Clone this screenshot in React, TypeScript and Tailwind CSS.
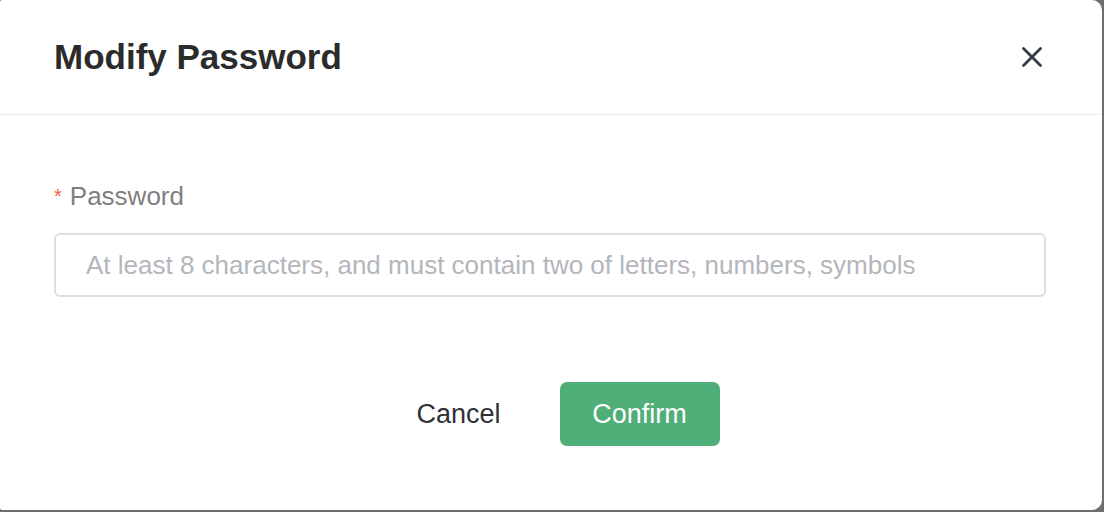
import React from 'react';

const CloseIcon: React.FC = () => (
  <svg width="22" height="22" viewBox="0 0 22 22" fill="none" stroke="#343a44" strokeWidth={2.8} strokeLinecap="round">
    <path d="M2.5 2.5L19.5 19.5M19.5 2.5L2.5 19.5" />
  </svg>
);

export default function App() {
  return (
    <div className="h-[512px] w-[1104px] overflow-hidden bg-[#6e6e6e]" style={{ fontFamily: '"Liberation Sans", Arial, sans-serif' }}>
      <div className="flex h-[510px] w-[1102px] flex-col rounded-tl-[2px] rounded-bl-[2px] rounded-tr-[10px] rounded-br-[10px] bg-white">
        {/* header */}
        <div className="flex h-[115px] items-center justify-between border-b border-[#e9edf1] pl-[54px] pr-[59px]">
          <h2 className="mt-[1px] text-[35px] font-bold text-[#2b2b2b]">Modify Password</h2>
          <button className="flex h-[22px] w-[22px] items-center justify-center">
            <CloseIcon />
          </button>
        </div>

        {/* body */}
        <div className="px-[54px] pt-[66px]">
          <label className="flex items-center text-[26px] leading-[30px] text-[#7f7f7f]">
            <span className="mr-[8px] text-[20px] text-[#e5673f]">*</span>
            Password
          </label>
          <div className="mt-[22px] flex h-[64px] w-[992px] items-center rounded-[6px] border-2 border-[#dcdee2] px-[30px]">
            <input
              className="w-full bg-transparent text-[26px] text-[#333] outline-none placeholder:text-[#b3b6bc]"
              placeholder="At least 8 characters, and must contain two of letters, numbers, symbols"
            />
          </div>
        </div>

        {/* footer */}
        <div className="mt-[85px] flex justify-center gap-[21px] pr-[4px]">
          <button className="h-[64px] w-[160px] rounded-[7px] text-[27px] text-[#2f3136]">Cancel</button>
          <button className="h-[64px] w-[160px] rounded-[7px] bg-[#50ae79] text-[27px] text-white">Confirm</button>
        </div>
      </div>
    </div>
  );
}
